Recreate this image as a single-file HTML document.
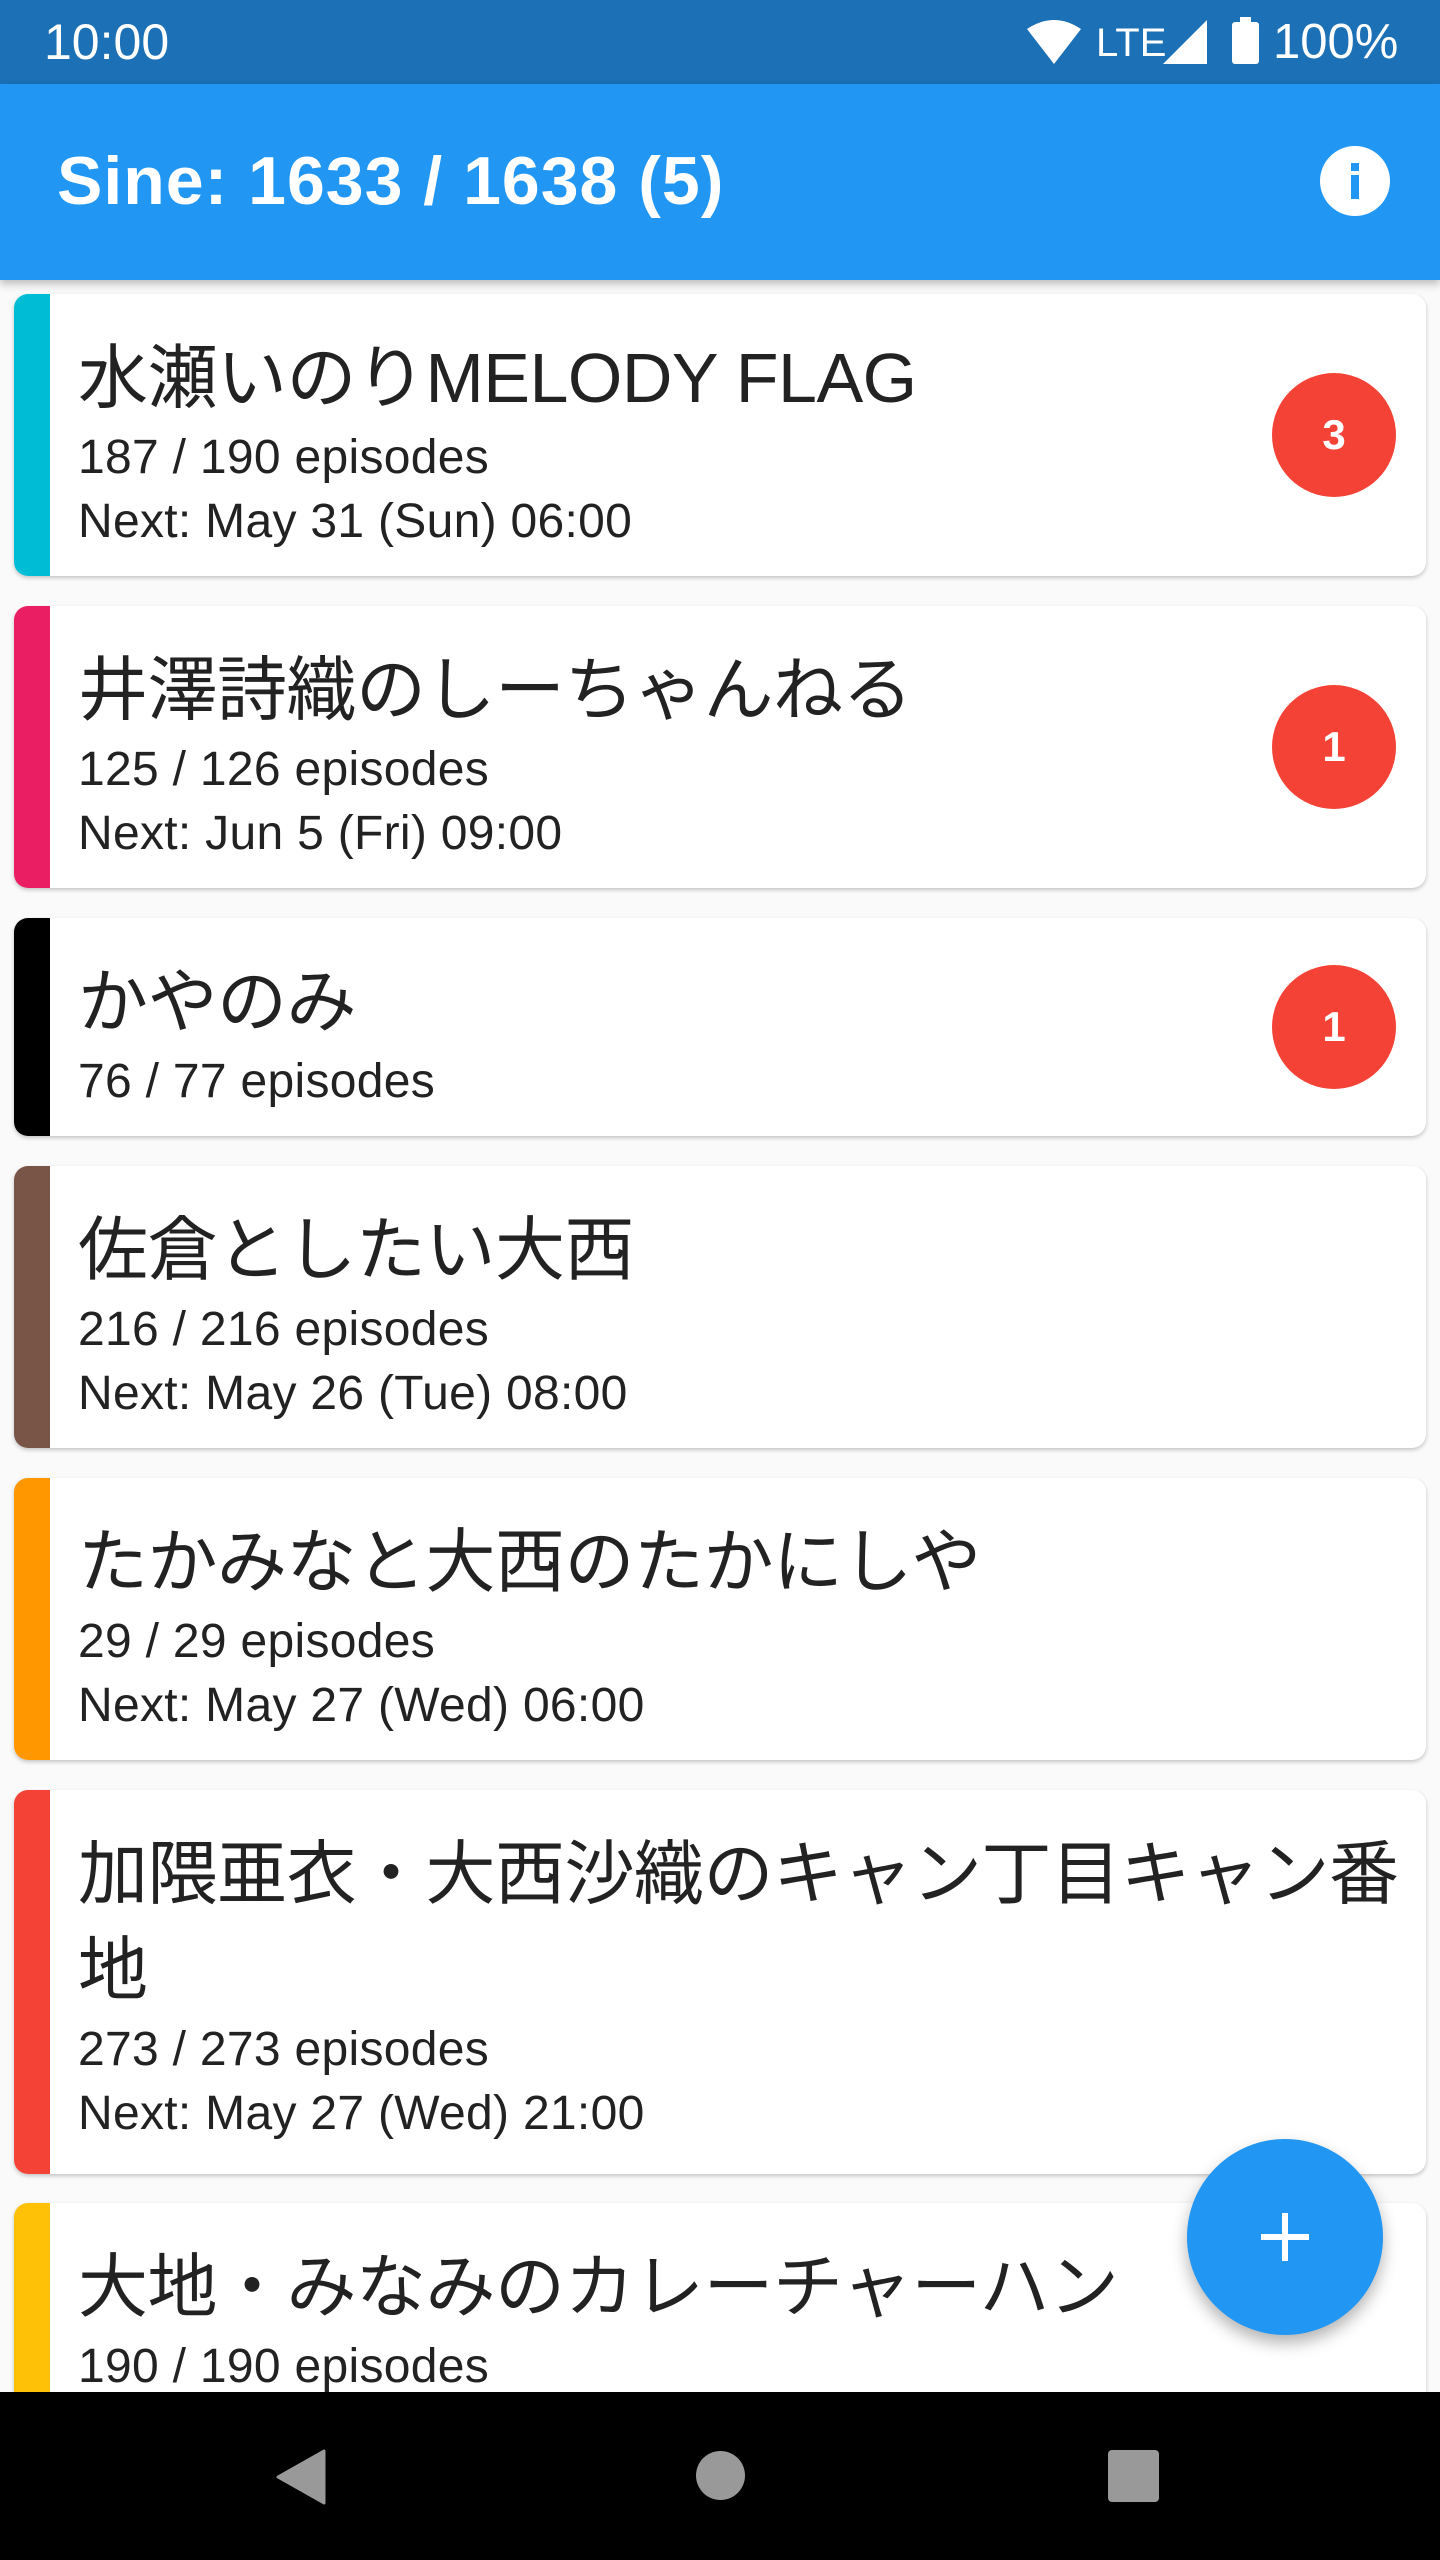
<!DOCTYPE html>
<html><head><meta charset="utf-8"><style>
*{margin:0;padding:0;box-sizing:border-box}
body{width:1440px;height:2560px;background:#fafafa;position:relative;overflow:hidden;font-family:"Liberation Sans","Noto Sans CJK JP",sans-serif}
.status{position:absolute;left:0;top:0;width:1440px;height:84px;background:#1b70b6;color:#fff}
.appbar{position:absolute;left:0;top:84px;width:1440px;height:196px;background:#2196f3;box-shadow:0 4px 8px rgba(0,0,0,.25);z-index:2}
.card{position:absolute;left:14px;width:1412px;background:#fff;border-radius:14px;box-shadow:0 2px 4px rgba(0,0,0,.22);overflow:hidden;padding:36px 0 22px 64px}
.bar{position:absolute;left:0;top:0;bottom:0;width:36px}
.t{font-size:70px;line-height:96px;color:#222;font-family:"Liberation Sans","Noto Sans CJK JP",sans-serif;letter-spacing:-0.5px}
.s{font-size:48px;line-height:64px;color:#222;letter-spacing:0.3px}
.badge{position:absolute;right:30px;top:50%;margin-top:-62px;width:124px;height:124px;border-radius:50%;background:#f44336;color:#fff;font-weight:bold;font-size:42px;line-height:124px;text-align:center}
.nav{position:absolute;left:0;top:2392px;width:1440px;height:168px;background:#000}
</style></head><body>
<div class="status">
<div style="position:absolute;left:44px;top:13px;font-size:50px">10:00</div>
<svg style="position:absolute;left:1027px;top:20px" width="54" height="44" viewBox="0 0 54 44"><path d="M0 9 Q27 -9 54 9 L27 44Z" fill="#fff"/></svg>
<div style="position:absolute;left:1096px;top:21px;font-size:40px">LTE</div>
<svg style="position:absolute;left:1163px;top:20px" width="44" height="44"><path d="M44 0V44H0Z" fill="#fff"/></svg>
<div style="position:absolute;left:1232px;top:22px;width:27px;height:42px;background:#fff;border-radius:3px"></div>
<div style="position:absolute;left:1240px;top:17px;width:11px;height:6px;background:#fff"></div>
<div style="position:absolute;left:1273px;top:14px;font-size:49px">100%</div>
</div>
<div class="appbar">
<div style="position:absolute;left:57px;top:58px;font-size:68px;font-weight:bold;color:#fff;letter-spacing:1px">Sine: 1633 / 1638 (5)</div>
<svg style="position:absolute;left:1320px;top:62px" width="70" height="70" viewBox="0 0 70 70"><circle cx="35" cy="35" r="35" fill="#fff"/><rect x="31" y="29" width="8" height="24" fill="#2196f3"/><rect x="31" y="17" width="8" height="8" fill="#2196f3"/></svg>
</div>

<div class="card" style="top:294px"><div class="bar" style="background:#00bcd4"></div><div class="t">水瀬いのりMELODY FLAG</div><div class="s">187 / 190 episodes</div><div class="s">Next: May 31 (Sun) 06:00</div><div class="badge">3</div></div>
<div class="card" style="top:606px"><div class="bar" style="background:#e91e63"></div><div class="t">井澤詩織のしーちゃんねる</div><div class="s">125 / 126 episodes</div><div class="s">Next: Jun 5 (Fri) 09:00</div><div class="badge">1</div></div>
<div class="card" style="top:918px"><div class="bar" style="background:#000"></div><div class="t">かやのみ</div><div class="s">76 / 77 episodes</div><div class="badge">1</div></div>
<div class="card" style="top:1166px"><div class="bar" style="background:#795548"></div><div class="t">佐倉としたい大西</div><div class="s">216 / 216 episodes</div><div class="s">Next: May 26 (Tue) 08:00</div></div>
<div class="card" style="top:1478px"><div class="bar" style="background:#ff9800"></div><div class="t">たかみなと大西のたかにしや</div><div class="s">29 / 29 episodes</div><div class="s">Next: May 27 (Wed) 06:00</div></div>
<div class="card" style="top:1790px;height:384px;padding-right:10px"><div class="bar" style="background:#f44336"></div><div class="t">加隈亜衣・大西沙織のキャン丁目キャン番地</div><div class="s">273 / 273 episodes</div><div class="s">Next: May 27 (Wed) 21:00</div></div>
<div class="card" style="top:2203px;height:300px"><div class="bar" style="background:#ffc107"></div><div class="t">大地・みなみのカレーチャーハン</div><div class="s">190 / 190 episodes</div></div>

<div style="position:absolute;left:1187px;top:2139px;width:196px;height:196px;border-radius:50%;background:#2196f3;box-shadow:0 8px 16px rgba(0,0,0,.3);z-index:3">
<div style="position:absolute;left:95px;top:74px;width:6px;height:48px;background:#fff"></div>
<div style="position:absolute;left:74px;top:95px;width:48px;height:6px;background:#fff"></div>
</div>

<div class="nav">
<svg style="position:absolute;left:276px;top:57px" width="50" height="56"><path d="M48 2V54L2 28Z" fill="#999" stroke="#999" stroke-width="3" stroke-linejoin="round"/></svg>
<div style="position:absolute;left:696px;top:59px;width:49px;height:49px;border-radius:50%;background:#999"></div>
<div style="position:absolute;left:1108px;top:58px;width:51px;height:52px;border-radius:4px;background:#999"></div>
</div>
</body></html>
